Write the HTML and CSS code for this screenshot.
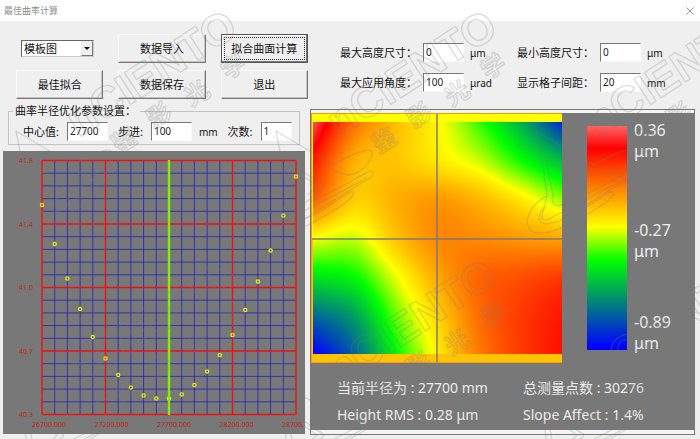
FILE: index.html
```html
<!DOCTYPE html>
<html lang="zh-CN">
<head>
<meta charset="utf-8">
<title>最佳曲率计算</title>
<link rel="stylesheet" href="styles.css">
</head>
<body>
<header class="titlebar">
  <h1 class="title">最佳曲率计算</h1>
  <button class="close" type="button" aria-label="关闭">
    <svg width="8" height="8" viewBox="0 0 8 8"><path d="M.5 .5l7 7M7.5 .5l-7 7"/></svg>
  </button>
</header>
<main class="window">
  <section class="left">
    <div class="actions">
      <div class="picker">
        <select class="select" aria-label="图类型"><option>模板图</option></select>
        <span class="arrow"></span>
      </div>
      <button class="btn" type="button">数据导入</button>
      <button class="btn focused" type="button">拟合曲面计算</button>
      <button class="btn" type="button">最佳拟合</button>
      <button class="btn" type="button">数据保存</button>
      <button class="btn" type="button">退出</button>
    </div>
    <fieldset class="params">
      <legend>曲率半径优化参数设置：</legend>
      <div class="params-row">
        <label for="center">中心值:</label><input id="center" class="box" value="27700">
        <label for="step" class="next">步进:</label><input id="step" class="box" value="100"><span class="unit">mm</span>
        <label for="times" class="next">次数:</label><input id="times" class="box short" value="1">
      </div>
    </fieldset>
    <svg class="chart" id="chart" viewBox="3 151 302 283" role="img" aria-label="曲率半径优化曲线"></svg>
  </section>
  <section class="right">
    <div class="fields">
      <label for="maxh">最大高度尺寸：</label><input id="maxh" class="box" value="0"><span class="unit">μm</span>
      <label for="minh">最小高度尺寸：</label><input id="minh" class="box" value="0"><span class="unit">μm</span>
      <label for="maxa">最大应用角度：</label><input id="maxa" class="box" value="100"><span class="unit">μrad</span>
      <label for="grid">显示格子间距：</label><input id="grid" class="box" value="20"><span class="unit">mm</span>
    </div>
    <div class="frame">
      <div class="result">
        <div class="plot">
          <div class="map">
            <canvas id="surface" class="surface" width="249" height="232"></canvas>
          </div>
          <div class="scale"></div>
          <div class="ticks"><p>0.36<br>μm</p><p>-0.27<br>μm</p><p>-0.89<br>μm</p></div>
        </div>
        <div class="info">
          <span>当前半径为 : 27700 mm</span><span>总测量点数 : 30276</span>
          <span>Height RMS : 0.28 μm</span><span>Slope Affect : 1.4%</span>
        </div>
      </div>
    </div>
  </section>
</main>
<svg class="watermark" aria-hidden="true">
  <defs>
    <pattern id="mark" width="260" height="249" patternUnits="userSpaceOnUse">
      <g fill="none" stroke="#777" stroke-opacity=".24" stroke-width="1.4" stroke-linejoin="round">
        <g transform="translate(79 138) rotate(-33)">
          <text class="brand" x="0" y="0">nCIENTO</text>
        </g>
        <g class="brand-cn">
          <text transform="translate(124 140) rotate(-33)" y="9">鉴</text>
          <text transform="translate(159 115) rotate(-33)" y="9">影</text>
          <text transform="translate(197 93) rotate(-33)" y="9">光</text>
          <text transform="translate(233 66) rotate(-33)" y="9">学</text>
        </g>
        <path d="M16 131L73 165Q92 154 106 150Q116 149 110 160Q102 174 88 175Q76 173 66 165"/>
        <path d="M16 131C21 155 25 180 27 196L22 215Q21 222 29 219L55 205Q85 190 107 178"/>
        <path d="M26 159L58 182Q68 186 60 190L52 197Q40 209 34 204Q31 201 33 196L26 159M43 176L57 186L48 195"/>
        <path d="M27 196C12 203 5 218 8 226C12 238 31 233 46 226C65 216 82 207 92 197C96 191 91 190 85 195C67 207 45 222 27 224C16 224 17 212 27 206"/>
        <path d="M45 219C66 204 88 191 112 177C115 172 112 170 108 172C87 183 69 194 51 201"/>
      </g>
    </pattern>
  </defs>
  <rect width="100%" height="100%" fill="url(#mark)"/>
</svg>
<script src="plots.js"></script>
</body>
</html>
```
FILE: styles.css
```css
* { box-sizing: border-box; }

body {
  margin: 0;
  min-height: 100vh;
  display: flex;
  flex-direction: column;
  position: relative;
  background: #efefef;
  color: #111;
  font: 11px/14px "Noto Sans", "Noto Sans CJK SC", sans-serif;
}

.titlebar {
  display: flex;
  justify-content: space-between;
  align-items: center;
  height: 21px;
  padding: 0 6px 0 4px;
  background: #fff;
}
.title { margin: 0; font-size: 9px; font-weight: 400; color: #8c8c8c; }
.close { display: flex; padding: 0; border: 0; background: none; }
.close path { stroke: #999; fill: none; }

.window {
  flex: 1;
  display: grid;
  grid-template-columns: minmax(0, 305fr) minmax(0, 385fr);
  gap: 2px;
  padding: 0 5px 4px 3px;
}
.left, .right { display: flex; flex-direction: column; }

.actions {
  display: grid;
  grid-template-columns: repeat(3, 1fr);
  grid-auto-rows: 29px;
  gap: 7px 15px;
  padding: 13px 0 0 13px;
}
.btn {
  padding: 0;
  border: 1px solid;
  border-color: #fafafa #777 #777 #fafafa;
  box-shadow: inset -1px -1px #c4c4c4;
  background: #efefef;
  color: #111;
  font: inherit;
}
.focused {
  border: 1px solid #555;
  box-shadow: inset -1px -1px #777, inset 1px 1px #fff;
  outline: 1px dotted #333;
  outline-offset: -4px;
}
.picker { position: relative; align-self: center; margin: 0 9px 0 5px; }
.select {
  display: block;
  appearance: none;
  width: 100%;
  height: 17px;
  padding: 0 2px;
  border: 1px solid;
  border-color: #666 #ccc #ccc #666;
  border-radius: 0;
  background: #fff;
  color: #111;
  font: inherit;
}
.arrow {
  position: absolute;
  inset: 1px 1px 1px auto;
  width: 12px;
  display: grid;
  place-items: center;
  border: 1px solid;
  border-color: #eee #777 #777 #eee;
  background: #efefef;
  pointer-events: none;
}
.arrow::after {
  content: "";
  border: 3px solid transparent;
  border-top-color: #111;
  border-bottom: 0;
}

.params {
  min-width: 0;
  margin: 5px 8px 0 5px;
  padding: 4px 4px 3px;
  border: 1px solid #c4c4c4;
}
.params legend { padding: 0 4px 0 2px; }
.params-row { display: flex; align-items: center; padding-left: 10px; }
.params-row .box { margin-left: 8px; }
.params-row .unit { margin-left: 7px; }
.params-row .next { margin-left: 10px; }
.box {
  width: 41px;
  height: 19px;
  padding: 0 2px 2px;
  border: 1px solid;
  border-color: #777 #f8f8f8 #f8f8f8 #777;
  background: #fff;
  color: #222;
  font: 10px "Noto Sans", sans-serif;
}
.short { width: 31px; }
.unit { font-size: 10px; }

.chart { display: block; margin: 6px 3px 0 0; background: #787878; }
.chart .minor { stroke: #1c1cc0; stroke-opacity: .75; }
.chart .major { stroke: #f01010; stroke-width: 1.4; }
.chart .now { stroke: #80f000; stroke-width: 2.4; }
.chart circle { fill: none; stroke: #f0f000; stroke-width: 1.3; }
.chart text { fill: #c82010; font-size: 7px; }

.fields {
  display: grid;
  grid-template-columns: 83px 41px 53px 83px 41px auto;
  grid-auto-rows: 19px;
  align-items: center;
  gap: 11px 0;
  padding: 22px 0 17px 30px;
  white-space: nowrap;
}
.fields .unit { margin-left: 6px; }

.frame {
  flex: 1;
  display: flex;
  border: 1px solid #777;
  padding: 3px 0 4px;
  background: #f4f4f4;
}
.result { flex: 1; background: #787878; color: #ececec; }
.plot { display: flex; }
.map {
  position: relative;
  flex: 0 1 251px;
  padding: 8px 0 8px 1px;
  border: 1px solid #ff9800;
  border-width: 1px 0 1px 1px;
  background: linear-gradient(#ffff00 50%, #ffc400 50%);
}
.surface { display: block; width: 100%; height: 232px; }
.map::before, .map::after { content: ""; position: absolute; background: #787878b8; }
.map::before { left: 50%; top: 0; bottom: 0; width: 2px; margin-left: -1px; }
.map::after { top: 50%; left: 0; right: 0; height: 2px; }
.scale {
  flex: 0 0 40px;
  margin: 13px 0 13px 25px;
  background: linear-gradient(#ff6464, #f00 10%, #ff0 45%, #0f0 60%, #00f 99%);
}
.ticks {
  display: grid;
  grid-template-rows: 99fr 92fr auto;
  margin: 7px 0 9px 7px;
  font-size: 16px;
  line-height: 21px;
}
.ticks p { margin: 0; }
.info {
  display: grid;
  grid-template-columns: 186px auto;
  gap: 7px 0;
  padding: 15px 0 0 26px;
  font-size: 14px;
  line-height: 20px;
  white-space: nowrap;
}

.watermark { position: absolute; inset: 0; width: 100%; height: 100%; pointer-events: none; }
.brand { font: bold 44px "Liberation Sans", sans-serif; }
.brand-cn { font: bold 24px "Noto Sans CJK SC", sans-serif; text-anchor: middle; }
```
FILE: plots.js
```js
// Curvature chart
const chart = document.getElementById('chart');
const add = (tag, attrs, text) => {
  const el = document.createElementNS('http://www.w3.org/2000/svg', tag);
  for (const k in attrs) el.setAttribute(k, attrs[k]);
  if (text) el.textContent = text;
  chart.appendChild(el);
};
const left = 42, top0 = 160.5, size = 254, step = size / 20;
for (const major of [false, true]) {
  for (let i = 0; i <= 20; i++) {
    if ((i % 5 === 0) !== major) continue;
    const cls = major ? 'major' : 'minor';
    const x = left + i * step, y = top0 + i * step;
    add('line', { x1: x, x2: x, y1: top0, y2: top0 + size, class: cls });
    add('line', { x1: left, x2: left + size, y1: y, y2: y, class: cls });
  }
}
const values = [205, 244, 278.5, 309, 337, 358.5, 375, 387.5, 395.5, 398.5, 398.5,
  394.5, 385, 371.5, 355, 335, 310, 281.5, 250.5, 215.5, 176.5];
values.forEach((y, i) => add('circle', { cx: left + i * step, cy: y, r: 1.6 }));
add('line', { x1: 169, x2: 169, y1: 160, y2: 415, class: 'now' });
['41.8', '41.4', '41.0', '40.7', '40.3'].forEach((t, i) =>
  add('text', { x: 33, y: 163 + i * 63.5, 'text-anchor': 'end' }, t));
['26700.000', '27200.000', '27700.000', '28200.000', '28700.'].forEach((t, i) =>
  add('text', { x: 32 + i * 62.5, y: 427 }, t));

// Surface map: height samples from 0 (highest) to 1 (lowest), bicubic between samples
const field = [
  [.02, .25, .36, .44, .57, .72, .93],
  [.13, .34, .37, .42, .48, .59, .70],
  [.23, .38, .34, .31, .35, .42, .51],
  [.45, .48, .37, .29, .29, .31, .33],
  [.64, .60, .46, .33, .24, .21, .18],
  [.83, .74, .54, .39, .25, .18, .13],
  [1.0, .84, .61, .43, .27, .18, .12]
];
const stops = [[0, 255, 100, 100], [.1, 255, 0, 0], [.45, 255, 255, 0], [.6, 0, 255, 0], [.99, 0, 0, 255]];
const cubic = (a, b, c, d, t) =>
  b + .5 * t * (c - a + t * (2 * a - 5 * b + 4 * c - d + t * (3 * (b - c) + d - a)));
const along = (arr, p) => {
  const i = Math.min(Math.floor(p), arr.length - 2);
  const n = arr.length - 1;
  const before = i > 0 ? arr[i - 1] : 2 * arr[0] - arr[1];
  const after = i + 2 <= n ? arr[i + 2] : 2 * arr[n] - arr[n - 1];
  return cubic(before, arr[i], arr[i + 1], after, p - i);
};
const color = v => {
  v = Math.max(0, Math.min(.989, v));
  let k = 0;
  while (v > stops[k + 1][0]) k++;
  const a = stops[k], b = stops[k + 1], t = (v - a[0]) / (b[0] - a[0]);
  return [1, 2, 3].map(c => a[c] + (b[c] - a[c]) * t);
};
const canvas = document.getElementById('surface');
const ctx = canvas.getContext('2d');
const { width: w, height: h } = canvas;
const img = ctx.createImageData(w, h);
for (let y = 0; y < h; y++) {
  for (let x = 0; x < w; x++) {
    const rows = field.map(r => along(r, x / (w - 1) * 6));
    const [r, g, b] = color(along(rows, y / (h - 1) * 6));
    img.data.set([r, g, b, 255], (y * w + x) * 4);
  }
}
ctx.putImageData(img, 0, 0);
```
